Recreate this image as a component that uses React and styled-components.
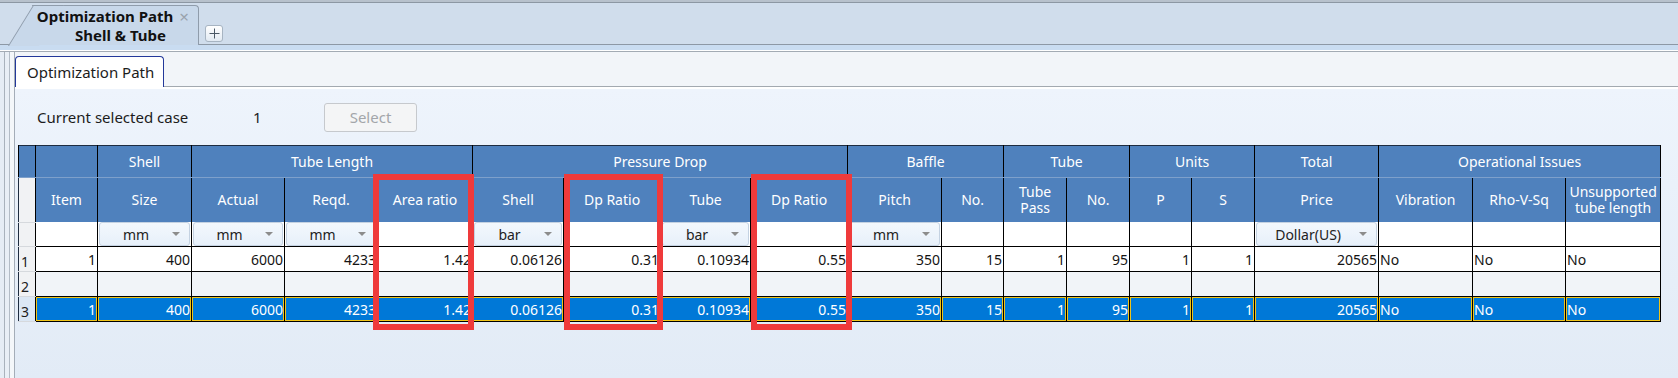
import styled, { createGlobalStyle } from "styled-components";

const GlobalStyle = createGlobalStyle`
  html, body {
    margin: 0;
    padding: 0;
    background: #d0ddec;
  }
  body {
    font-family: "Noto Sans", "Open Sans", sans-serif;
    color: #1a1a1a;
  }
`;

const columns = [
  { key: "item", w: 62, label: "Item" },
  { key: "size", w: 94, label: "Size", unit: "mm" },
  { key: "actual", w: 93, label: "Actual", unit: "mm" },
  { key: "reqd", w: 93, label: "Reqd.", unit: "mm" },
  { key: "area", w: 95, label: "Area ratio" },
  { key: "pdShell", w: 91, label: "Shell", unit: "bar" },
  { key: "dp1", w: 97, label: "Dp Ratio" },
  { key: "pdTube", w: 90, label: "Tube", unit: "bar" },
  { key: "dp2", w: 97, label: "Dp Ratio" },
  { key: "pitch", w: 94, label: "Pitch", unit: "mm" },
  { key: "baffleNo", w: 62, label: "No." },
  { key: "pass", w: 63, label: ["Tube", "Pass"] },
  { key: "tubeNo", w: 63, label: "No." },
  { key: "p", w: 62, label: "P" },
  { key: "s", w: 63, label: "S" },
  { key: "price", w: 124, label: "Price", unit: "Dollar(US)" },
  { key: "vib", w: 94, label: "Vibration", left: true },
  { key: "rho", w: 93, label: "Rho-V-Sq", left: true },
  { key: "uns", w: 95, label: ["Unsupported", "tube length"], left: true },
];

const groups = [
  { label: "", span: 1 },
  { label: "Shell", span: 1 },
  { label: "Tube Length", span: 3 },
  { label: "Pressure Drop", span: 4 },
  { label: "Baffle", span: 2 },
  { label: "Tube", span: 2 },
  { label: "Units", span: 2 },
  { label: "Total", span: 1 },
  { label: "Operational Issues", span: 3 },
];

const result = {
  item: "1", size: "400", actual: "6000", reqd: "4233", area: "1.42",
  pdShell: "0.06126", dp1: "0.31", pdTube: "0.10934", dp2: "0.55",
  pitch: "350", baffleNo: "15", pass: "1", tubeNo: "95", p: "1", s: "1",
  price: "20565", vib: "No", rho: "No", uns: "No",
};

const rows = [
  { n: 1, data: result },
  { n: 2, data: null },
  { n: 3, data: result, selected: true },
];

// red annotation frames, relative to the table's top-left corner
const marks = [
  { left: 355, width: 101 },
  { left: 546, width: 99 },
  { left: 733, width: 101 },
];

const Screen = styled.div`
  width: 1678px;
  height: 378px;
  overflow: hidden;
  display: flex;
  flex-direction: column;
  background: #d0ddec;
`;

const TopEdge = styled.div`
  height: 2px;
  background: #b7c1cc;
  border-bottom: 1px solid #8c97a3;
`;

const TabStrip = styled.div`
  height: 41px;
  display: flex;
  align-items: flex-end;
  gap: 6px;
  border-bottom: 1px solid #8d98a5;
`;

const DocTab = styled.div`
  position: relative;
  margin-left: 32px;
  margin-bottom: -1px;
  width: 166px;
  height: 39px;
  background: #c8d8ea;
  border-top: 1px solid #8f9cab;
  border-right: 1px solid #8f9cab;
  border-top-right-radius: 4px;
  z-index: 1;

  &::before {
    content: "";
    position: absolute;
    left: -24px;
    top: -1px;
    width: 30px;
    height: 40px;
    background: #c8d8ea;
    border-left: 1px solid #8f9cab;
    border-top: 1px solid #8f9cab;
    transform-origin: bottom left;
    transform: skewX(-31.6deg);
    z-index: -1;
  }
`;

const DocTitle = styled.div`
  display: flex;
  flex-direction: column;
  align-items: flex-end;
  padding-top: 1px;
  font-size: 15px;
  font-weight: 700;
  line-height: 19px;
  color: #111;
`;

const TitleLine = styled.div`
  display: flex;
  align-items: center;
  gap: 6px;
  padding-right: ${(p) => p.$pad || 0}px;
`;

const CloseMark = styled.span`
  font-weight: 400;
  font-size: 17px;
  color: #9aa3ad;
  line-height: 1;
`;

const AddButton = styled.div`
  width: 16px;
  height: 15px;
  margin-bottom: 2px;
  display: grid;
  place-items: center;
  border: 1px solid #a7b4c2;
  border-radius: 3px;
  background: linear-gradient(#ffffff, #e2eaf3);
`;

const Band = styled.div`
  height: 5px;
  background: #c9dcf1;
  border-bottom: 1px solid #ffffff;
`;

const FrameOuter = styled.div`
  flex: 1;
  display: flex;
  padding-left: 4px;
  border-top: 1px solid #a3abb4;
  background: #e6edf5;
`;

const FrameLine = styled.div`
  flex: 1;
  display: flex;
  border-left: 1px solid ${(p) => p.$c};
  padding-left: ${(p) => p.$pad}px;
  background: ${(p) => p.$bg};
`;

const Panel = styled.div`
  flex: 1;
  display: flex;
  flex-direction: column;
  border-left: 1px solid #a4adb8;
`;

const SubTabBar = styled.div`
  height: 34px;
  display: flex;
  align-items: flex-end;
  background: #f2f5f9;
  border-bottom: 1px solid #a3a9b0;
`;

const SubTab = styled.div`
  margin-bottom: -1px;
  height: 30px;
  padding: 0 9px 0 11px;
  display: flex;
  align-items: center;
  background: #ffffff;
  border: 1px solid #23389a;
  border-bottom: none;
  border-radius: 4px 4px 0 0;
  font-size: 15px;
  color: #1c1c1c;
`;

const Content = styled.div`
  flex: 1;
  border-top: 2px solid #ffffff;
  padding-left: 3px;
  background: linear-gradient(#eef4fc, #e2ebf6);
`;

const CaseRow = styled.div`
  height: 56px;
  display: flex;
  align-items: center;
  padding-left: 19px;
  font-size: 15px;
  color: #1c1c1c;
`;

const CaseLabel = styled.span`
  width: 216px;
`;

const CaseValue = styled.span`
  width: 71px;
`;

const SelectButton = styled.button`
  width: 93px;
  height: 29px;
  border: 1px solid #c6c9cd;
  border-radius: 3px;
  background: #f4f5f6;
  color: #a3a6aa;
  font-family: inherit;
  font-size: 15px;
  padding: 0;
`;

const TableWrap = styled.div`
  position: relative;
  width: 1642px;
`;

const Grid = styled.table`
  table-layout: fixed;
  border-collapse: collapse;
  width: 1642px;
  border: 1px solid #1e2c40;
  font-size: 14px;
`;

const Col = styled.col`
  width: ${(p) => p.$w}px;
`;

const GroupCell = styled.th`
  height: 31px;
  padding: 0;
  background: #4f81bd;
  color: #ffffff;
  font-weight: 400;
  border-left: 1px solid #000;
  border-right: 1px solid #000;
  border-bottom: 1px solid #7ea0cb;
`;

const HeadCell = styled.th`
  height: 44px;
  padding: 0 2px;
  background: #4f81bd;
  color: #ffffff;
  font-weight: 400;
  line-height: 16px;
  border-left: 1px solid #000;
  border-right: 1px solid #000;
`;

const RowHead = styled.td`
  padding: 0 0 0 2px;
  background: ${(p) => (p.$active ? "#dbe7f4" : "#f1f2f4")};
  border-bottom: 1px solid #d6d9dd;
  border-right: 1px solid #000;
  color: #1c1c1c;
  font-size: 14px;
  vertical-align: bottom;
`;

const UnitCell = styled.td`
  height: 24px;
  padding: 0 1px;
  background: #ffffff;
  border-left: 1px solid #000;
  border-right: 1px solid #000;
`;

const Drop = styled.div`
  height: 22px;
  display: flex;
  align-items: center;
  border: 1px solid #c4d2e2;
  border-radius: 3px;
  background: linear-gradient(#f3f8fd, #e7f0fa);
  color: #222;
`;

const DropText = styled.span`
  flex: 1;
  text-align: center;
`;

const Caret = styled.span`
  width: 0;
  height: 0;
  margin-right: 9px;
  border-left: 4px solid transparent;
  border-right: 4px solid transparent;
  border-top: 4px solid #8c8c8c;
`;

const Cell = styled.td`
  height: 24px;
  padding: 0 1px;
  border: 1px solid #000;
  text-align: ${(p) => (p.$left ? "left" : "right")};
  white-space: nowrap;
  overflow: hidden;
  background: ${(p) => (p.$sel ? "#0078d7" : p.$alt ? "#f1f4f8" : "#ffffff")};
  color: ${(p) => (p.$sel ? "#ffffff" : "#141414")};
  box-shadow: ${(p) => (p.$sel ? "inset 0 0 0 1px #f0c419" : "none")};
`;

const Mark = styled.div`
  position: absolute;
  top: 29px;
  height: 156px;
  box-sizing: border-box;
  border: 6px solid #ef3a3b;
  pointer-events: none;
`;

function PlusIcon() {
  return (
    <svg width="11" height="11" viewBox="0 0 11 11">
      <path d="M5.5 0.5v10M0.5 5.5h10" stroke="#4a5866" strokeWidth="1" />
    </svg>
  );
}

function HeaderLabel({ label }) {
  if (Array.isArray(label)) {
    return (
      <>
        {label[0]}
        <br />
        {label[1]}
      </>
    );
  }
  return label;
}

export default function App() {
  return (
    <Screen>
      <GlobalStyle />
      <TopEdge />
      <TabStrip>
        <DocTab>
          <DocTitle>
            <TitleLine $pad={9}>
              Optimization Path <CloseMark>×</CloseMark>
            </TitleLine>
            <TitleLine $pad={32}>Shell &amp; Tube</TitleLine>
          </DocTitle>
        </DocTab>
        <AddButton>
          <PlusIcon />
        </AddButton>
      </TabStrip>
      <Band />
      <FrameOuter>
        <FrameLine $c="#a9b2bc" $pad={4} $bg="#e9eff6">
          <FrameLine $c="#b3bcc6" $pad={4} $bg="#f4f7fa">
            <Panel>
              <SubTabBar>
                <SubTab>Optimization Path</SubTab>
              </SubTabBar>
              <Content>
                <CaseRow>
                  <CaseLabel>Current selected case</CaseLabel>
                  <CaseValue>1</CaseValue>
                  <SelectButton disabled>Select</SelectButton>
                </CaseRow>
                <TableWrap>
                  <Grid>
                    <colgroup>
                      <Col $w={17} />
                      {columns.map((c) => (
                        <Col key={c.key} $w={c.w} />
                      ))}
                    </colgroup>
                    <thead>
                      <tr>
                        <GroupCell />
                        {groups.map((g, i) => (
                          <GroupCell key={i} colSpan={g.span}>
                            {g.label}
                          </GroupCell>
                        ))}
                      </tr>
                      <tr>
                        <RowHead />
                        {columns.map((c) => (
                          <HeadCell key={c.key}>
                            <HeaderLabel label={c.label} />
                          </HeadCell>
                        ))}
                      </tr>
                    </thead>
                    <tbody>
                      <tr>
                        <RowHead />
                        {columns.map((c) => (
                          <UnitCell key={c.key}>
                            {c.unit && (
                              <Drop>
                                <DropText>{c.unit}</DropText>
                                <Caret />
                              </Drop>
                            )}
                          </UnitCell>
                        ))}
                      </tr>
                      {rows.map((r) => (
                        <tr key={r.n}>
                          <RowHead $active={r.selected}>{r.n}</RowHead>
                          {columns.map((c) => (
                            <Cell
                              key={c.key}
                              $left={c.left}
                              $sel={r.selected}
                              $alt={!r.data}
                            >
                              {r.data ? r.data[c.key] : ""}
                            </Cell>
                          ))}
                        </tr>
                      ))}
                    </tbody>
                  </Grid>
                  {marks.map((m, i) => (
                    <Mark key={i} style={{ left: m.left, width: m.width }} />
                  ))}
                </TableWrap>
              </Content>
            </Panel>
          </FrameLine>
        </FrameLine>
      </FrameOuter>
    </Screen>
  );
}
